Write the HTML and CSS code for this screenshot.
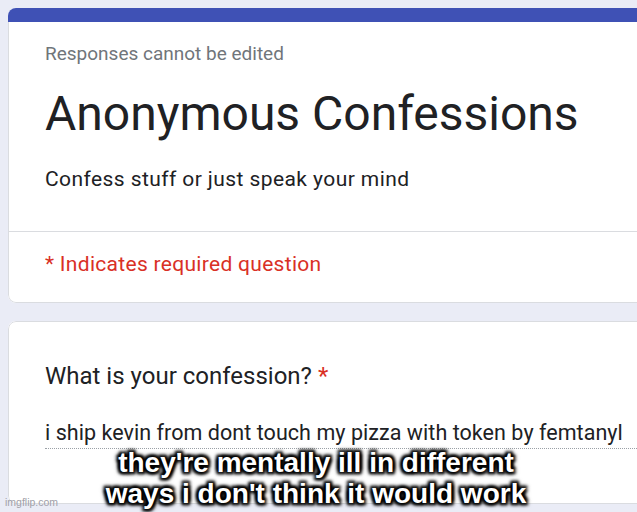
FILE: index.html
```html
<!DOCTYPE html>
<html lang="en">
<head>
<meta charset="utf-8">
<title>Anonymous Confessions</title>
<link rel="stylesheet" href="styles.css">
</head>
<body>
<main class="form">
  <section class="card header-card">
    <div class="theme-bar"></div>
    <div class="card-body">
      <div class="notice">Responses cannot be edited</div>
      <h1 class="title">Anonymous Confessions</h1>
      <p class="description">Confess stuff or just speak your mind</p>
      <div class="divider"></div>
      <p class="required-note">* Indicates required question</p>
    </div>
  </section>
  <section class="card question-card">
    <div class="card-body question-body">
      <div class="question">What is your confession? <span class="asterisk">*</span></div>
      <div class="answer">i ship kevin from dont touch my pizza with token by femtanyl</div>
    </div>
  </section>
</main>
<div class="caption">they're mentally ill in different<br>ways i don't think it would work</div>
<div class="watermark">imgflip.com</div>
</body>
</html>
```
FILE: styles.css
```css
html, body {
  margin: 0;
  padding: 0;
  overflow: hidden;
}
body {
  width: 637px;
  height: 512px;
  background: #eaecf6;
  font-family: Roboto, "Noto Sans", sans-serif;
  color: #202124;
  position: relative;
}
.form {
  padding: 8px 0 0 8px;
  width: 720px;
}
.card {
  border-radius: 8px;
  overflow: hidden;
  background: #fff;
}
.theme-bar {
  height: 14px;
  background: #3f51b5;
}
.card-body {
  border: 1px solid #dadce0;
  border-radius: 8px;
  background: #fff;
}
.header-card .card-body {
  border-top: none;
  border-radius: 0 0 8px 8px;
  padding: 20px 0 24px 0;
}
.notice {
  font-size: 19px;
  line-height: 24px;
  color: #70757a;
  padding-left: 36px;
}
.title {
  margin: 20px 0 0 0;
  font-size: 48px;
  line-height: 56px;
  font-weight: 400;
  padding-left: 36px;
}
.description {
  margin: 23px 0 0 0;
  font-size: 21px;
  line-height: 28px;
  letter-spacing: 0.42px;
  padding-left: 36px;
  padding-bottom: 38px;
}
.divider {
  height: 1px;
  background: #dadce0;
}
.required-note {
  margin: 18px 0 0 0;
  font-size: 21px;
  line-height: 28px;
  letter-spacing: 0.3px;
  color: #d93025;
  padding-left: 36px;
}
.question-card {
  margin-top: 18px;
}
.question-body {
  padding: 38px 0 54px 36px;
}
.question {
  font-size: 24px;
  line-height: 32px;
}
.asterisk {
  color: #d93025;
}
.answer {
  margin-top: 27px;
  font-size: 21.5px;
  line-height: 28px;
  letter-spacing: 0.05px;
  padding-bottom: 1px;
  border-bottom: 1px dotted #9aa0a6;
}
.caption {
  position: absolute;
  left: 0;
  top: 447px;
  width: 632px;
  text-align: center;
  font-family: "Liberation Sans", Arial, sans-serif;
  font-weight: 700;
  font-size: 28px;
  line-height: 31px;
  color: #fff;
  text-shadow: 2px 2px 3px #000, -2px -2px 3px #000, 2px -2px 3px #000, -2px 2px 3px #000, 0 0 4px #000, 0 0 5px #000, 0 0 6px #000;
}
.watermark {
  position: absolute;
  left: 5px;
  top: 496px;
  font-family: "Liberation Sans", Arial, sans-serif;
  font-size: 10.5px;
  line-height: 12px;
  color: #a0a0a8;
}
```
